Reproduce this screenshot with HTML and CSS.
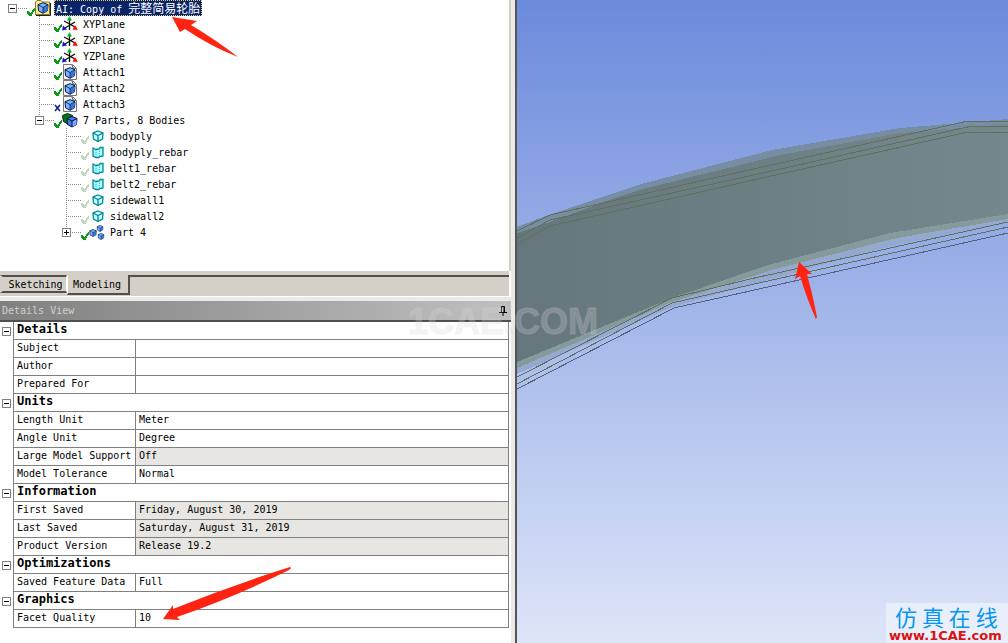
FILE: index.html
```html
<!DOCTYPE html>
<html lang="en">
<head>
    <meta charset="UTF-8" />
    <title>DesignModeler</title>
    <link rel="stylesheet" href="styles.css">
</head>
<body>
    <!-- shared icons -->
    <svg class="defs" width="0" height="0">
        <symbol id="check" viewBox="0 0 8 8"><path d="M0 3h2v1h1v1h1V4h1V2h1V1h1V0h1v3H7v1H6v2H5v2H2V7H1V6H0z" fill="currentColor"/></symbol>
        <symbol id="cross" viewBox="0 0 8 8"><path d="M1 1l5 6M6 1L1 7" stroke="#0a1f8c" stroke-width="1.6"/></symbol>
        <symbol id="cube" viewBox="0 0 12 12"><path d="M6 .7l5 2-.5 6L6 11.3 1.500 8.700 1 2.700z" fill="#7db4f8" stroke="#001850"/><path d="M6 6l5-3-.5 5.700L6 11z" fill="#3a74d8"/><path d="M1 2.700l5 2.800 5-2.800M6 5.500v5.500" fill="none" stroke="#001850" stroke-width=".8"/></symbol>
        <symbol id="folder" viewBox="0 0 16 16"><path d="M.5 14.500V2L2 .5h4L7.500 2h7v12.500z" fill="#ffe98a" stroke="#8a7a20"/><path d="M1 15.500h14.500V3" fill="none" stroke="#222"/><use href="#cube" x="2" y="2" width="12" height="12"/></symbol>
        <symbol id="plane" viewBox="0 0 16 16"><path d="M7.500 14V3M2 5l11 6M13 6L3 12" stroke="#111" stroke-width="1.400"/><path d="M7.500 0l2.500 4.500h-5z" fill="#00c020"/><path d="M16 14l-5.500-.500 2.500-4.500z" fill="#f01010"/><path d="M0 14.500l1-5 4 4z" fill="#1010e0"/></symbol>
        <symbol id="attach" viewBox="0 0 16 16"><path d="M1.500.5h9l4 4v11h-13z" fill="#f4f4f4" stroke="#777"/><path d="M10 1l1 3 3 .5" fill="none" stroke="#456"/><use href="#cube" x="2" y="3" width="12" height="12"/></symbol>
        <symbol id="bodies" viewBox="0 0 16 16"><path d="M5.500 1.500l5 2v7l-4 2-5-3-1-6z" fill="#007a18" stroke="#012a08"/><path d="M10 4.500l5 2-.5 6-4.500 2.500-4.500-2.500-.5-6z" fill="#4c7cf4" stroke="#001040"/><path d="M10 9l4.500-2v5.500L10 15z" fill="#78a8ff"/><path d="M5 6.500L10 9l5-2.500M10 9v6" fill="none" stroke="#001040"/></symbol>
        <symbol id="solid" viewBox="0 0 16 16"><path d="M9 3l5 2-.5 6L9 13.500 4.500 11 4 5z" fill="#c8ffff" stroke="#008a9c" stroke-width="1.300"/><path d="M4 5l5 2.500L14 5M9 7.500v6" fill="none" stroke="#008a9c" stroke-width="1.300"/></symbol>
        <symbol id="surface" viewBox="0 0 16 16"><path d="M4 4l3 1.500 3-.5 1-1.500h3v8.500l-3 .5-1 1H7L4 12z" fill="#a8f8ff" stroke="#008a9c" stroke-width="1.300"/><path d="M7 6v7M10.500 5v7" stroke="#30c8d8" stroke-dasharray="1 1"/></symbol>
        <symbol id="part" viewBox="0 0 16 16"><use href="#cube" x="7" y="1" width="8" height="7"/><use href="#cube" x="0" y="5" width="8" height="8"/><use href="#cube" x="8" y="9" width="8" height="7"/></symbol>
    </svg>

    <div class="app">
        <div class="side">
            <ul class="tree">
                <li>
                    <div class="row root"><span class="joint"><button class="box" aria-label="Collapse model"></button></span><svg class="mark"><use href="#check"/></svg><svg class="icon"><use href="#folder"/></svg><span class="label selected">AI: Copy of <span class="cjk">完整简易轮胎</span></span></div>
                    <ul class="branch">
                        <li><div class="row"><span class="joint"></span><svg class="mark"><use href="#check"/></svg><svg class="icon"><use href="#plane"/></svg><span class="label">XYPlane</span></div></li>
                        <li><div class="row"><span class="joint"></span><svg class="mark"><use href="#check"/></svg><svg class="icon"><use href="#plane"/></svg><span class="label">ZXPlane</span></div></li>
                        <li><div class="row"><span class="joint"></span><svg class="mark"><use href="#check"/></svg><svg class="icon"><use href="#plane"/></svg><span class="label">YZPlane</span></div></li>
                        <li><div class="row"><span class="joint"></span><svg class="mark"><use href="#check"/></svg><svg class="icon"><use href="#attach"/></svg><span class="label">Attach1</span></div></li>
                        <li><div class="row"><span class="joint"></span><svg class="mark"><use href="#check"/></svg><svg class="icon"><use href="#attach"/></svg><span class="label">Attach2</span></div></li>
                        <li><div class="row"><span class="joint"></span><svg class="mark"><use href="#cross"/></svg><svg class="icon"><use href="#attach"/></svg><span class="label">Attach3</span></div></li>
                        <li>
                            <div class="row last"><span class="joint"><button class="box" aria-label="Collapse parts"></button></span><svg class="mark"><use href="#check"/></svg><svg class="icon"><use href="#bodies"/></svg><span class="label">7 Parts, 8 Bodies</span></div>
                            <ul class="branch">
                                <li><div class="row"><span class="joint"></span><svg class="mark pale"><use href="#check"/></svg><svg class="icon"><use href="#solid"/></svg><span class="label">bodyply</span></div></li>
                                <li><div class="row"><span class="joint"></span><svg class="mark pale"><use href="#check"/></svg><svg class="icon"><use href="#surface"/></svg><span class="label">bodyply_rebar</span></div></li>
                                <li><div class="row"><span class="joint"></span><svg class="mark pale"><use href="#check"/></svg><svg class="icon"><use href="#surface"/></svg><span class="label">belt1_rebar</span></div></li>
                                <li><div class="row"><span class="joint"></span><svg class="mark pale"><use href="#check"/></svg><svg class="icon"><use href="#surface"/></svg><span class="label">belt2_rebar</span></div></li>
                                <li><div class="row"><span class="joint"></span><svg class="mark pale"><use href="#check"/></svg><svg class="icon"><use href="#solid"/></svg><span class="label">sidewall1</span></div></li>
                                <li><div class="row"><span class="joint"></span><svg class="mark pale"><use href="#check"/></svg><svg class="icon"><use href="#solid"/></svg><span class="label">sidewall2</span></div></li>
                                <li><div class="row last"><span class="joint"><button class="box plus" aria-label="Expand Part 4"></button></span><svg class="mark"><use href="#check"/></svg><svg class="icon"><use href="#part"/></svg><span class="label">Part 4</span></div></li>
                            </ul>
                        </li>
                    </ul>
                </li>
            </ul>

            <div class="tabs">
                <button class="tab">Sketching</button>
                <button class="tab active">Modeling</button>
                <span class="tab-rest"></span>
            </div>

            <div class="titlebar">
                <span>Details View</span>
                <button class="pin" aria-label="Pin"><svg width="8" height="10" viewBox="0 0 8 10"><path d="M2.500 6V.5h3V6M5 .5V6M0 6.500h8M4 6v4" fill="none" stroke="#000"/></svg></button>
            </div>

            <table class="details">
                <colgroup><col class="col-gutter"><col class="col-name"><col></colgroup>
                <tbody>
                    <tr><td class="gutter"><button class="box" aria-label="Collapse Details"></button></td><th class="group" colspan="2">Details</th></tr>
                    <tr><td class="gutter"></td><th>Subject</th><td></td></tr>
                    <tr><td class="gutter"></td><th>Author</th><td></td></tr>
                    <tr><td class="gutter"></td><th>Prepared For</th><td></td></tr>
                </tbody>
                <tbody>
                    <tr><td class="gutter"><button class="box" aria-label="Collapse Units"></button></td><th class="group" colspan="2">Units</th></tr>
                    <tr><td class="gutter"></td><th>Length Unit</th><td>Meter</td></tr>
                    <tr><td class="gutter"></td><th>Angle Unit</th><td>Degree</td></tr>
                    <tr><td class="gutter"></td><th>Large Model Support</th><td class="readonly">Off</td></tr>
                    <tr><td class="gutter"></td><th>Model Tolerance</th><td>Normal</td></tr>
                </tbody>
                <tbody>
                    <tr><td class="gutter"><button class="box" aria-label="Collapse Information"></button></td><th class="group" colspan="2">Information</th></tr>
                    <tr><td class="gutter"></td><th>First Saved</th><td class="readonly">Friday, August 30, 2019</td></tr>
                    <tr><td class="gutter"></td><th>Last Saved</th><td class="readonly">Saturday, August 31, 2019</td></tr>
                    <tr><td class="gutter"></td><th>Product Version</th><td class="readonly">Release 19.2</td></tr>
                </tbody>
                <tbody>
                    <tr><td class="gutter"><button class="box" aria-label="Collapse Optimizations"></button></td><th class="group" colspan="2">Optimizations</th></tr>
                    <tr><td class="gutter"></td><th>Saved Feature Data</th><td>Full</td></tr>
                </tbody>
                <tbody>
                    <tr><td class="gutter"><button class="box" aria-label="Collapse Graphics"></button></td><th class="group" colspan="2">Graphics</th></tr>
                    <tr><td class="gutter"></td><th>Facet Quality</th><td>10</td></tr>
                </tbody>
            </table>
        </div>

        <div class="splitter"></div>

        <div class="viewport">
            <svg class="model" viewBox="517 0 491 643" preserveAspectRatio="xMinYMin slice">
                <defs>
                    <linearGradient id="skin" x1="0" y1="0" x2="1" y2="0"><stop offset="0" stop-color="#66767d"/><stop offset="1" stop-color="#74888d"/></linearGradient>
                </defs>
                <g shape-rendering="crispEdges">
                    <path d="M517 362L672 296 768 262 890 232 1008 213V223L890 246 768 280 672 307 517 374z" fill="#94a8d0"/>
                    <path d="M517 227L548 215 645 183 772 150 900 128 1008 119V219L897 238 775 269 672 302 517 368z" fill="#768da3"/>
                    <path d="M517 350L672 290 768 258 890 225 1008 206V219L897 238 775 269 672 302 517 368z" fill="#859b9b"/>
                    <path d="M517 233L550 222 612 199 643 189 780 155 900 133 1008 124V214L890 233 768 265 672 298 517 362z" fill="url(#skin)"/>
                    <g fill="none" stroke="#5f7259">
                        <path d="M517 231L550 215 758 168 968 121H984L1008 122"/>
                        <path d="M517 238L550 220 758 174 972 126 1008 127"/>
                        <path d="M517 244L550 226 758 179 968 132H1008"/>
                        <path d="M517 377L672 298 750 279 1008 222"/>
                        <path d="M517 384L672 303 750 285 1008 227"/>
                        <path d="M517 389L674 308 750 291 1008 233" stroke="#53627a"/>
                    </g>
                </g>
            </svg>
            <div class="brand">
                <div class="brand-name">仿 真 在 线</div>
                <a href="#">www.1CAE.com</a>
            </div>
        </div>
    </div>

    <div class="watermark">1CAE.COM</div>

    <svg class="arrows" width="1008" height="643" fill="#ff2412">
        <path d="M172 17L197 21 191 25Q216 40 238 57 210 46 185 29L180 32z"/>
        <path d="M163 619L173 605V609Q230 586 290 567 292 568 289 570 235 597 177 617L180 620z"/>
        <path d="M799 262L812 274H807Q813 296 817 317 816 320 815 317 807 299 800 276L795 279z"/>
    </svg>
</body>
</html>
```
FILE: styles.css
```css
:root {
    --face: #d4d0c8;
    --line: #808080;
    --dots: #8c8c8c;
}
* { box-sizing: border-box; }
body {
    margin: 0;
    font-family: "DejaVu Sans Mono", "Noto Sans CJK SC", monospace;
    font-size: 10px;
    line-height: 16px;
    color: #000;
    background: #fff;
}
button {
    padding: 0;
    border: 0;
    background: none;
    font: inherit;
    color: inherit;
}
.defs { position: absolute; }

.app {
    display: flex;
    min-height: 100vh;
}
.side {
    flex: 0 0 511px;
    display: flex;
    flex-direction: column;
}
.splitter {
    flex: 0 0 6px;
    background: #ebeae7;
    border-right: 2px solid #555;
}

/* Model tree */
.tree, .branch {
    list-style: none;
    margin: 0;
    padding: 0;
}
.tree {
    padding: 0 0 31px 12px;
    border-right: 2px solid var(--face);
}
.branch { padding-left: 27px; }
.row {
    display: flex;
    height: 16px;
    background: repeating-linear-gradient(var(--dots) 0 1px, transparent 1px 2px) no-repeat 0 0 / 1px 100%;
}
.row.last { background-size: 1px 8px; }
.row.root { background: none; }
.joint {
    width: 15px;
    height: 16px;
    display: flex;
    align-items: center;
    background: repeating-linear-gradient(90deg, var(--dots) 0 1px, transparent 1px 2px) no-repeat 0 8px / 100% 1px;
}
.box {
    display: block;
    width: 9px;
    height: 9px;
    border: 1px solid var(--line);
    background: linear-gradient(#000, #000) no-repeat center / 5px 1px #fff;
}
.plus {
    background: linear-gradient(#000, #000) no-repeat center / 5px 1px, linear-gradient(#000, #000) no-repeat center / 1px 5px #fff;
}
.joint .box { margin-left: -4px; }
.mark {
    width: 8px;
    height: 8px;
    margin-top: 8px;
    color: #0a9a1a;
}
.pale { color: #bcd8bf; }
.icon {
    width: 16px;
    height: 16px;
}
.label {
    padding: 0 2px;
    margin-left: 3px;
    line-height: 18px;
    white-space: pre;
}
.selected {
    line-height: 16px;
    background: #0a246a;
    color: #fff;
    outline: 1px dotted #e8c860;
    outline-offset: -1px;
}
.cjk {
    font-family: "Noto Sans CJK SC", sans-serif;
    font-size: 12px;
}

/* Sketching / Modeling tabs */
.tabs {
    display: flex;
    align-items: flex-start;
    height: 26px;
    padding-top: 4px;
    background: var(--face);
    border-bottom: 1px solid #fff;
    border-right: 2px solid #fff;
}
.tab {
    height: 18px;
    width: 67px;
    padding-left: 2px;
    border: solid;
    border-width: 2px 1px 2px 3px;
    border-color: #505050 #fff #505050 var(--face);
}
.tab.active {
    height: 20px;
    width: 63px;
    padding: 2px 2px 0 0;
    border-width: 0 2px 2px 1px;
    border-color: #505050 #505050 #505050 #fff;
}
.tab-rest {
    flex: 1;
    border-top: 2px solid #505050;
}

/* Details View */
.titlebar {
    display: flex;
    align-items: center;
    justify-content: space-between;
    height: 25px;
    padding: 0 4px 0 2px;
    border-top: 4px solid #ebeae7;
    border-bottom: 2px solid #505050;
    background: linear-gradient(90deg, #808080, #c0c0c0);
    color: var(--face);
}
.pin svg { display: block; }
.details {
    width: 509px;
    table-layout: fixed;
    border-collapse: separate;
    border-spacing: 0;
    line-height: 15px;
}
.col-gutter { width: 13px; }
.col-name { width: 122px; }
.details th, .details td {
    height: 18px;
    padding: 0 0 2px 3px;
    border-left: 1px solid var(--line);
    border-bottom: 1px solid var(--line);
    text-align: left;
    font-weight: normal;
    white-space: nowrap;
}
.details tr > :last-child { border-right: 1px solid var(--line); }
.details .gutter {
    padding: 0 0 0 2px;
    border: 0;
}
.details .group {
    font-size: 12px;
    font-weight: bold;
}
.details .readonly { background: #e8e6e2; }

/* 3D view */
.viewport {
    flex: 1;
    position: relative;
    background: linear-gradient(#6c8adc, #dde5f8);
}
.model {
    position: absolute;
    width: 100%;
    height: 100%;
}
.brand {
    position: absolute;
    right: 0;
    bottom: 0;
    width: 122px;
    height: 40px;
    padding-left: 3px;
    background: rgba(240, 243, 252, 0.7);
    font: bold 13px/13px "DejaVu Sans", sans-serif;
}
.brand a {
    display: block;
    color: #d81414;
    text-decoration: none;
}
.brand-name {
    padding-left: 6px;
    font: 22px/26px "Noto Sans CJK SC", sans-serif;
    color: #0a96f0;
}

/* Overlays */
.watermark {
    position: absolute;
    left: 408px;
    top: 302px;
    font: bold 36px/40px "Liberation Sans", sans-serif;
    color: rgba(215, 215, 215, 0.25);
    -webkit-text-stroke: 2px rgba(215, 215, 215, 0.15);
    pointer-events: none;
}
.arrows {
    position: absolute;
    left: 0;
    top: 0;
    pointer-events: none;
}
```
